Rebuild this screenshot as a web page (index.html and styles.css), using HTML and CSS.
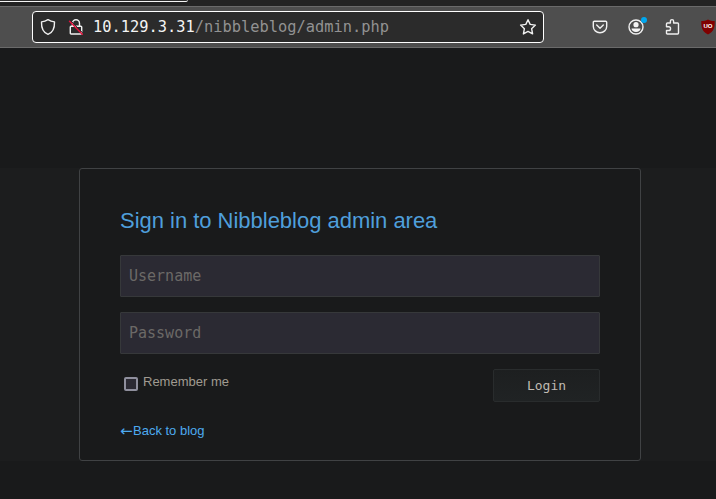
FILE: index.html
```
<!DOCTYPE html>
<html lang="en">
<head>
<meta charset="utf-8">
<title>Nibbleblog</title>
<link rel="stylesheet" href="styles.css">
</head>
<body>
<div class="tabs"><div class="tab"></div></div>
<header class="toolbar">
  <div class="urlbar">
    <svg class="shield" width="16" height="18" viewBox="0 0 16 18"><path d="M8 1.6c2 1.3 4 2 6.500 2.300.2 5.600-1.300 10.300-6.500 12.500C2.800 14.200 1.300 9.500 1.500 3.900 4 3.600 6 2.900 8 1.600z"/></svg>
    <svg class="lock" width="16" height="18" viewBox="0 0 16 18"><path d="M4.500 8V5.200a3.500 3.500 0 0 1 7 0V8M3.200 8.200h9.600q.9 0 .9.900v6q0 .9-.9.900H3.200q-.9 0-.9-.9v-6q0-.9.900-.9z"/><path class="gap" d="M2.600 2.600l12.400 12.600"/><path class="slash" d="M1.500 3.200l12.800 13"/></svg>
    <div class="url"><span class="host">10.129.3.31</span>/nibbleblog/admin.php</div>
    <svg class="star" width="18" height="18" viewBox="0 0 18 18"><path d="M9 1.700l2.200 4.700 5.200.7-3.800 3.600 1 5.200L9 13.400l-4.600 2.500 1-5.200L1.600 7.100l5.200-.7z"/></svg>
  </div>
  <div class="actions">
    <svg width="18" height="18" viewBox="0 0 18 18"><path d="M3.300 3.200h11.400q1 0 1 1v4.300a6.700 6.200 0 0 1-13.400 0V4.200q0-1 1-1z"/><path d="M5.700 7l3.300 3.200L12.300 7"/></svg>
    <div class="account">
      <svg width="18" height="18" viewBox="0 0 18 18"><circle cx="9" cy="9" r="7"/><circle class="solid" cx="9" cy="6.700" r="2.600"/><path class="solid" d="M4.500 10.600h9c-.2 2-2 3.500-4.500 3.500s-4.300-1.500-4.500-3.500z"/></svg>
      <span class="dot"></span>
    </div>
    <svg width="18" height="18" viewBox="0 0 18 18"><path d="M3.500 8V5.900q0-.9.900-.9h3V3.200a1.600 1.600 0 0 1 3.200 0V5h4q.9 0 .9.900v9.200q0 .9-.9.900H4.400q-.9 0-.9-.9v-2.600h2.200a1.600 1.600 0 0 0 0-3.700H3.500z"/></svg>
    <div class="ublock">
      <svg width="16" height="18" viewBox="0 0 16 18"><path d="M8 1.500c2 1.100 4 1.500 6.700 1.600.2 6-.5 10.400-6.700 13.400C1.800 13.500 1.100 9.100 1.300 3.100 4 3 6 2.600 8 1.500z"/></svg>
      <span class="mark">UO</span>
    </div>
  </div>
</header>
<main class="page">
  <form class="card">
    <h1>Sign in to Nibbleblog admin area</h1>
    <input class="field" type="text" placeholder="Username">
    <input class="field" type="text" placeholder="Password">
    <div class="row">
      <label class="remember"><span class="box"></span>Remember me</label>
      <button class="login" type="button">Login</button>
    </div>
    <a class="back"><span class="arrow">←</span>Back to blog</a>
  </form>
</main>
</body>
</html>
```
FILE: styles.css
```
* { box-sizing: border-box; }
body {
  margin: 0;
  height: 499px;
  overflow: hidden;
  background: #191a1b;
  font-family: "Liberation Sans", Arial, sans-serif;
}
.tabs { height: 6px; background: #232323; }
.tab {
  width: 188px;
  height: 2px;
  background: #2b2b2b;
  border-bottom: 1px solid #f5f5f5;
  border-right: 1px solid #aaa;
  border-radius: 0 0 2px 0;
}
.toolbar {
  display: flex;
  align-items: center;
  height: 42px;
  padding-left: 32px;
  background: #4e4e4e;
  border-top: 1px solid #6a6a6a;
  border-bottom: 1px solid #6a6a6a;
}
.urlbar {
  display: flex;
  align-items: center;
  flex: none;
  width: 512px;
  height: 32px;
  padding: 0 6px 0 7px;
  background: #2b2b2b;
  border: 1px solid #fff;
  border-radius: 4px;
}
svg { display: block; flex: none; fill: none; stroke: #f0f0f0; stroke-width: 1.4; stroke-linejoin: round; stroke-linecap: round; }
.lock { margin-left: 12px; }
.lock .gap { stroke: #2b2b2b; stroke-width: 1; }
.lock .slash { stroke: #e8103c; }
.url {
  flex: 1;
  margin-left: 9px;
  color: #929292;
  font: 15.370px/20px "DejaVu Sans Mono", monospace;
  white-space: pre;
}
.host { color: #f4f4f4; }
.actions { display: flex; align-items: center; margin-left: 47px; gap: 18px; }
.actions .ublock { margin-left: 1px; }
.solid { fill: #f4f4f4; stroke: none; }
.account { position: relative; }
.dot {
  position: absolute;
  left: 14px;
  top: -1px;
  width: 6px;
  height: 6px;
  border-radius: 50%;
  background: #00a8f0;
}
.ublock { position: relative; width: 16px; }
.ublock path { fill: #800000; stroke: none; }
.mark {
  position: absolute;
  left: 0;
  top: 4px;
  width: 16px;
  color: #fff;
  font: bold 6px/8px "Liberation Sans", sans-serif;
  text-align: center;
}
.page {
  height: 413px;
  padding-top: 120px;
  background: linear-gradient(#191a1b 120px, #1c1d1e 120px);
}
.card {
  width: 562px;
  height: 293px;
  margin-left: 79px;
  padding: 37px 40px 0;
  background: #191a1b;
  border: 1px solid #404244;
  border-radius: 3px;
}
h1 {
  margin: 0 0 19px;
  color: #4f9fdb;
  font-size: 22px;
  letter-spacing: -0.02px;
  line-height: 30px;
  font-weight: 400;
  white-space: nowrap;
}
.field {
  display: block;
  width: 480px;
  height: 42px;
  margin: 0 0 15px;
  padding: 0 8px;
  color: #ddd;
  background: #2b2a33;
  border: 1px solid #36383a;
  border-radius: 1px;
  font: 15px/20px "DejaVu Sans Mono", monospace;
}
.field::placeholder { color: #6b6967; opacity: 1; }
.row { display: flex; justify-content: space-between; height: 33px; }
.remember {
  display: flex;
  align-items: flex-start;
  padding: 5px 0 0 4px;
  color: #a09a91;
  font-size: 13px;
  line-height: 16px;
}
.box {
  width: 14px;
  height: 14px;
  margin: 3px 5px 0 0;
  background: #2b2a33;
  border: 2px solid #8f8f9d;
  border-radius: 2px;
}
.login {
  width: 107px;
  height: 33px;
  padding: 0;
  color: #c0bbb3;
  background: linear-gradient(#1d1f20, #202324);
  border: 1px solid #292c2d;
  border-radius: 2px;
  font: 13px/16px "DejaVu Sans Mono", monospace;
}
.back {
  display: flex;
  margin-top: 21px;
  color: #4daaf0;
  font-size: 13px;
  line-height: 16px;
}
.arrow {
  width: 13px;
  font-family: "DejaVu Sans", sans-serif;
  font-size: 15px;
}
```
